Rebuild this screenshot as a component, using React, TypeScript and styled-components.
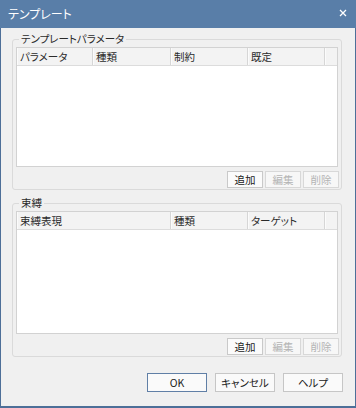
import React from "react";
import styled, { createGlobalStyle } from "styled-components";

const GlobalStyle = createGlobalStyle`
  html, body {
    margin: 0;
    padding: 0;
    background: #f0f0f0;
  }
  body {
    font-family: "Noto Sans CJK JP", "Noto Sans", sans-serif;
    font-feature-settings: "palt";
  }
`;

const Window = styled.div`
  width: 356px;
  height: 408px;
  box-sizing: border-box;
  border: 1px solid #4d6f98;
  border-top: none;
  border-bottom-width: 2px;
  background: #f0f0f0;
  display: flex;
  flex-direction: column;
`;

const TitleBar = styled.div`
  height: 26px;
  flex: none;
  margin: 0 -1px;
  background: #597ea8;
  display: flex;
  align-items: center;
  justify-content: space-between;
  padding: 0 9px 2px 8px;
  color: #ffffff;
  font-size: 12px;
`;

const CloseIcon = () => (
  <svg width="8" height="8" viewBox="0 0 8 8">
    <path d="M1 1 L7 7 M7 1 L1 7" stroke="#ffffff" strokeWidth="1.3" />
  </svg>
);

const Body = styled.div`
  flex: 1;
  display: flex;
  flex-direction: column;
  padding: 4px 13px 0 11px;
  gap: 6px;
`;

const Group = styled.fieldset`
  margin: 0;
  padding: 1px 3px 1px 3px;
  border: 1px solid #dadada;
  border-radius: 3px;
  min-width: 0;
`;

const Legend = styled.legend`
  margin-left: 3px;
  padding: 0 2px;
  font-size: 10.5px;
  line-height: 14px;
  color: #2a2a2a;
`;

const List = styled.div<{ $height: number }>`
  height: ${(p) => p.$height}px;
  border: 1px solid #d2d2d2;
  background: #ffffff;
  display: flex;
  flex-direction: column;
`;

const HeaderRow = styled.div<{ $cols: string }>`
  display: grid;
  grid-template-columns: ${(p) => p.$cols};
  height: 17px;
  background: #f3f3f3;
  border-bottom: 1px solid #dcdcdc;
`;

const HeaderCell = styled.div`
  padding-left: 3px;
  font-size: 10.5px;
  line-height: 17px;
  color: #2b2b2b;
  border-right: 1px solid #d6d6d6;
  box-shadow: inset 1px 0 0 #fbfbfb;
  white-space: nowrap;
  overflow: hidden;
  &:last-child {
    border-right: none;
  }
`;

const ButtonRow = styled.div<{ $top: number }>`
  display: flex;
  justify-content: flex-end;
  gap: 2px;
  margin-top: ${(p) => p.$top}px;
  margin-right: -1px;
`;

const SmallButton = styled.button`
  width: 36px;
  height: 17px;
  padding: 0;
  box-sizing: border-box;
  border: 1px solid #c9c9c9;
  background: #fbfbfb;
  font-family: inherit;
  font-feature-settings: "palt";
  font-size: 10.5px;
  line-height: 15px;
  color: #222222;
  &:disabled {
    color: #b4b4b4;
    border-color: #d8d8d8;
    background: #f7f7f7;
  }
`;

const Footer = styled.div`
  display: flex;
  justify-content: flex-end;
  gap: 8px;
  margin-top: 10px;
  margin-right: -1px;
`;

const DialogButton = styled.button<{ $primary?: boolean }>`
  width: 60px;
  height: 19px;
  padding: 0;
  box-sizing: border-box;
  border: 1px solid ${(p) => (p.$primary ? "#607fa6" : "#c6c6c6")};
  background: #fafafa;
  font-family: inherit;
  font-feature-settings: "palt";
  font-size: 10.5px;
  line-height: 17px;
  color: #222222;
`;

type Column = { label: string };

const ParamList = ({ cols, columns, height }: { cols: string; columns: Column[]; height: number }) => (
  <List $height={height}>
    <HeaderRow $cols={cols}>
      {columns.map((c, i) => (
        <HeaderCell key={i}>{c.label}</HeaderCell>
      ))}
    </HeaderRow>
  </List>
);

const Actions = ({ top }: { top: number }) => (
  <ButtonRow $top={top}>
    <SmallButton>追加</SmallButton>
    <SmallButton disabled>編集</SmallButton>
    <SmallButton disabled>削除</SmallButton>
  </ButtonRow>
);

export default function App() {
  return (
    <>
      <GlobalStyle />
      <Window>
        <TitleBar>
          <span>テンプレート</span>
          <CloseIcon />
        </TitleBar>
        <Body>
          <Group>
            <Legend>テンプレートパラメータ</Legend>
            <ParamList
              cols="76px 78px 77px 77px 1fr"
              height={118}
              columns={[{ label: "パラメータ" }, { label: "種類" }, { label: "制約" }, { label: "既定" }, { label: "" }]}
            />
            <Actions top={4} />
          </Group>
          <Group>
            <Legend>束縛</Legend>
            <ParamList
              cols="154px 77px 77px 1fr"
              height={121}
              columns={[{ label: "束縛表現" }, { label: "種類" }, { label: "ターゲット" }, { label: "" }]}
            />
            <Actions top={4} />
          </Group>
          <Footer>
            <DialogButton $primary>OK</DialogButton>
            <DialogButton>キャンセル</DialogButton>
            <DialogButton>ヘルプ</DialogButton>
          </Footer>
        </Body>
      </Window>
    </>
  );
}
